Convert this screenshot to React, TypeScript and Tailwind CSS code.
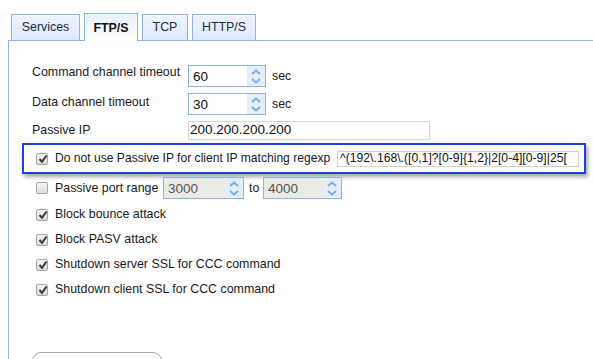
import React from "react";

function Chevrons() {
  return (
    <div className="flex h-full w-[18px] flex-col items-center justify-center gap-[3px] bg-[#e4edf8]">
      <svg width="10" height="6" viewBox="0 0 10 6">
        <path d="M1 5 L5 1.5 L9 5" fill="none" stroke="#7aaee6" strokeWidth="2" />
      </svg>
      <svg width="10" height="6" viewBox="0 0 10 6">
        <path d="M1 1 L5 4.5 L9 1" fill="none" stroke="#7aaee6" strokeWidth="2" />
      </svg>
    </div>
  );
}

function Spin({ value, width, disabled }: { value: string; width: string; disabled?: boolean }) {
  return (
    <div
      className={`flex h-[22px] ${width} border border-[#8ab3e6] ${
        disabled ? "bg-[#ebebe6] text-[#555]" : "bg-white text-[#111]"
      }`}
    >
      <div className="flex flex-1 items-center pl-[4px] pt-[3px] text-[13.5px]">{value}</div>
      <Chevrons />
    </div>
  );
}

function Check({ checked = true }: { checked?: boolean }) {
  return (
    <div className="relative h-[12px] w-[12px] shrink-0 rounded-[2px] border border-[#a6a6a6] bg-gradient-to-b from-[#f4f4f4] to-[#dcdcdc]">
      {checked && (
        <svg className="absolute left-[1px] top-[0px]" width="10" height="10" viewBox="0 0 10 10">
          <path d="M1.5 5 L4 7.8 L8.5 1.5" fill="none" stroke="#3a3a3a" strokeWidth="2" />
        </svg>
      )}
    </div>
  );
}

const tabs = [
  { name: "Services", w: "w-[69px]" },
  { name: "FTP/S", w: "w-[54px]", active: true },
  { name: "TCP", w: "w-[46px]" },
  { name: "HTTP/S", w: "w-[64px]" },
];

export default function App() {
  return (
    <div className="relative h-[359px] w-[593px] overflow-hidden bg-white font-['Liberation_Sans',Arial,sans-serif] text-[12.4px] text-[#1a1a1a]">
      {/* Tabs */}
      <div className="flex h-[40px] items-end gap-[4px] pl-[11px]">
        {tabs.map((t) =>
          t.active ? (
            <div
              key={t.name}
              className={`relative z-10 -mb-px flex h-[28px] ${t.w} items-center justify-center border border-b-0 border-[#8db5e6] bg-gradient-to-b from-[#e8f1fd] to-white pt-[1px] font-bold text-[#111]`}
            >
              {t.name}
            </div>
          ) : (
            <div
              key={t.name}
              className={`flex h-[26px] ${t.w} items-center justify-center border border-b-0 border-[#8db5e6] bg-gradient-to-b from-[#eef4fd] to-[#dde9fa] text-[#1e2a44]`}
            >
              {t.name}
            </div>
          )
        )}
      </div>

      {/* Panel */}
      <div className="ml-[8px] h-[319px] border-l border-t border-[#8db5e6] pt-[24px]">
        <div className="flex flex-col">
          <div className="flex h-[22px] items-start pl-[23px]">
            <div className="w-[156px] -mt-[2px]">Command channel timeout</div>
            <Spin value="60" width="w-[78px]" />
            <div className="ml-[6px] self-center">sec</div>
          </div>
          <div className="mt-[6px] flex h-[22px] items-start pl-[23px]">
            <div className="w-[156px]">Data channel timeout</div>
            <Spin value="30" width="w-[78px]" />
            <div className="ml-[6px] self-center">sec</div>
          </div>
          <div className="mt-[6px] flex h-[19px] items-start pl-[23px]">
            <div className="w-[156px]">Passive IP</div>
            <div className="flex h-[19px] w-[242px] items-center border border-[#d6d6d6] pl-[1px] text-[13.5px] text-[#111]">
              200.200.200.200
            </div>
          </div>

          {/* Highlighted row */}
          <div className="ml-[13px] mt-[3px] flex h-[31px] w-[564px] items-center border-2 border-[#1f3fe6] pl-[12px] shadow-[2px_3px_4px_rgba(0,0,0,0.35)]">
            <Check />
            <div className="ml-[7px] w-[282px] whitespace-nowrap text-[12.1px]">Do not use Passive IP for client IP matching regexp</div>
            <div className="flex h-[16px] w-[242px] items-center overflow-hidden whitespace-nowrap border border-[#d0d0d0] pl-[2px] text-[12.2px] text-[#111]">
              ^(192\.168\.([0,1]?[0-9]{"{1,2}"}|2[0-4][0-9]|25[
            </div>
          </div>

          <div className="mt-[3px] flex h-[22px] items-center pl-[27px]">
            <Check checked={false} />
            <div className="ml-[7px] w-[108px] whitespace-nowrap">Passive port range</div>
            <Spin value="3000" width="w-[81px]" disabled />
            <div className="ml-[5px] w-[14px]">to</div>
            <Spin value="4000" width="w-[79px]" disabled />
          </div>

          <div className="mt-[3px] flex flex-col pl-[27px]">
            {[
              "Block bounce attack",
              "Block PASV attack",
              "Shutdown server SSL for CCC command",
              "Shutdown client SSL for CCC command",
            ].map((l) => (
              <div key={l} className="flex h-[25px] items-center">
                <Check />
                <div className="ml-[7px]">{l}</div>
              </div>
            ))}
          </div>

          <div className="ml-[23px] mt-[50px] flex h-[24px] w-[130px] items-start justify-center rounded-[9px] border border-[#a8a8a8] bg-gradient-to-b from-white to-[#ececec] pt-[3px]">
            SSL/TLS Options
          </div>
        </div>
      </div>
    </div>
  );
}
